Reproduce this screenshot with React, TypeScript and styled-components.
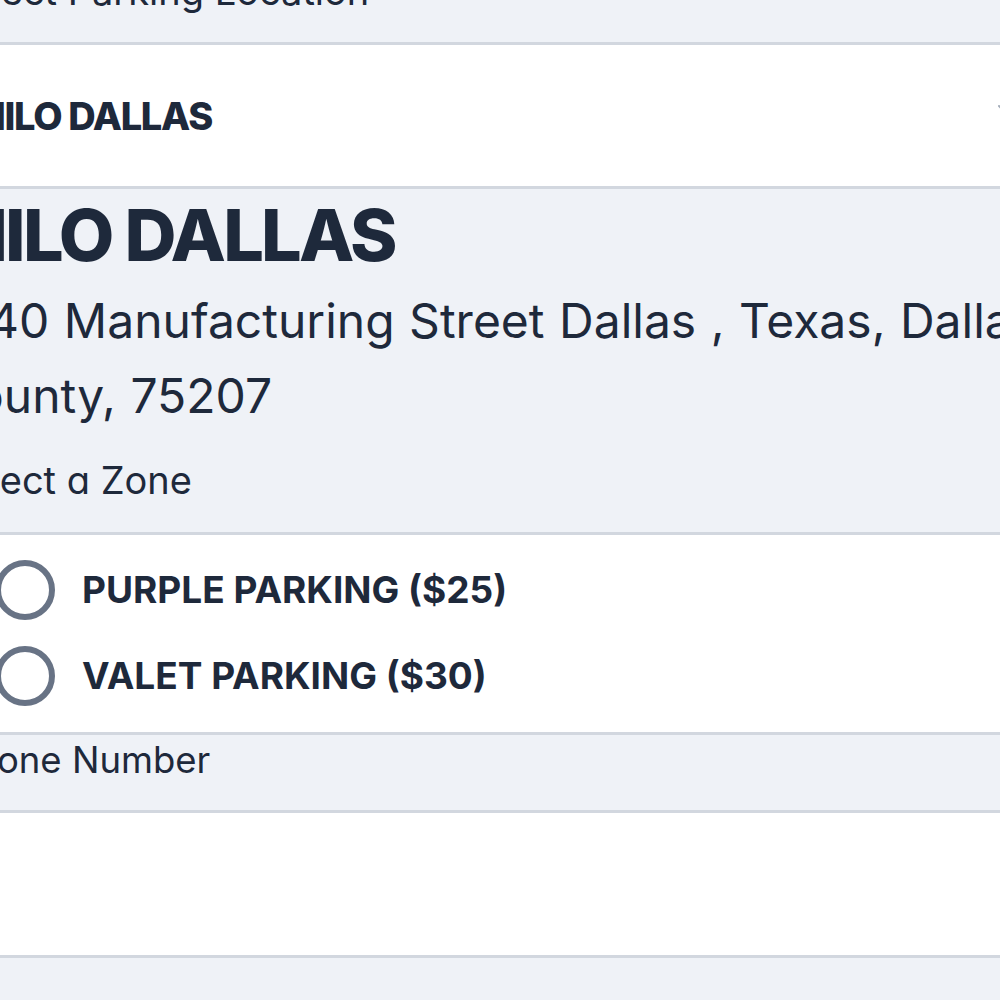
import React from "react";
import styled, { createGlobalStyle } from "styled-components";

const Global = createGlobalStyle`
  html, body { margin: 0; padding: 0; background: #eff2f7; overflow: hidden; }
  body { font-family: Inter, "Noto Sans", sans-serif; color: #1e293b; }
  * { box-sizing: border-box; }
`;

const Page = styled.div`
  width: 1120px;
  margin: -40px 0 0 -60px;
  display: flex;
  flex-direction: column;
`;

const Band = styled.section<{ $white?: boolean; $first?: boolean; $pad?: string }>`
  background: ${(p) => (p.$white ? "#ffffff" : "#eff2f7")};
  border-top: ${(p) => (p.$first ? "none" : "3px solid #d2d7df")};
  padding: ${(p) => p.$pad || "0"};
`;

const Label = styled.div<{ $indent?: number; $size?: number; $lh?: number }>`
  font-size: ${(p) => p.$size ?? 36}px;
  line-height: ${(p) => p.$lh ?? 48}px;
  font-weight: 400;
  padding-left: ${(p) => p.$indent ?? 0}px;
`;

const HeaderRow = styled.div`
  height: 141px;
  display: flex;
  align-items: center;
  justify-content: space-between;
  padding: 0 43px 0 30px;
`;

const HeaderName = styled.div`
  font-size: 38px;
  line-height: 46px;
  font-weight: 800;
  letter-spacing: -1.3px;
`;

const Chevron = styled.svg`
  width: 24px;
  height: 24px;
  margin-top: -14px;
  color: #a3acb9;
`;

const Title = styled.h1`
  margin: 0;
  font-size: 72px;
  line-height: 74px;
  font-weight: 800;
  letter-spacing: -2.8px;
`;

const Address = styled.p`
  margin: 11px 0 0;
  font-size: 48px;
  line-height: 75px;
  font-weight: 400;
  word-spacing: 1px;
`;

const ZoneLabel = styled(Label)`
  margin-top: 23px;
  font-feature-settings: "cv11" 1;
`;

const RadioRow = styled.label`
  height: 86px;
  display: flex;
  align-items: center;
  gap: 27px;
  padding-left: 55px;
`;

const Circle = styled.span`
  width: 60px;
  height: 60px;
  border-radius: 50%;
  border: 6px solid #687385;
  flex: none;
`;

const RadioText = styled.span`
  font-size: 37px;
  font-weight: 700;
  line-height: 44px;
`;

const InputArea = styled.div`
  height: 142px;
`;

const Tail = styled.div`
  height: 80px;
`;

export default function App() {
  return (
    <>
      <Global />
      <Page>
        <Band $first $pad="7px 0 27px">
          <Label $indent={5} $size={38}>Select Parking Location</Label>
        </Band>
        <Band $white>
          <HeaderRow>
            <HeaderName>MILO DALLAS</HeaderName>
            <Chevron viewBox="0 0 24 24" fill="none" stroke="currentColor" strokeWidth="2" strokeLinecap="round" strokeLinejoin="round">
              <path d="m6 9 6 6 6-6" />
            </Chevron>
          </HeaderRow>
        </Band>
        <Band $pad="9px 0 28px">
          <Title>MILO DALLAS</Title>
          <Address>1240 Manufacturing Street Dallas , Texas, Dallas County, 75207</Address>
          <ZoneLabel $indent={4} $size={38}>Select a Zone</ZoneLabel>
        </Band>
        <Band $white $pad="12px 0 13px">
          <RadioRow>
            <Circle />
            <RadioText>PURPLE PARKING ($25)</RadioText>
          </RadioRow>
          <RadioRow>
            <Circle />
            <RadioText>VALET PARKING ($30)</RadioText>
          </RadioRow>
        </Band>
        <Band $pad="3px 0 28px">
          <Label $indent={12} $size={36.5} $lh={44}>Phone Number</Label>
        </Band>
        <Band $white>
          <InputArea />
        </Band>
        <Band>
          <Tail />
        </Band>
      </Page>
    </>
  );
}
